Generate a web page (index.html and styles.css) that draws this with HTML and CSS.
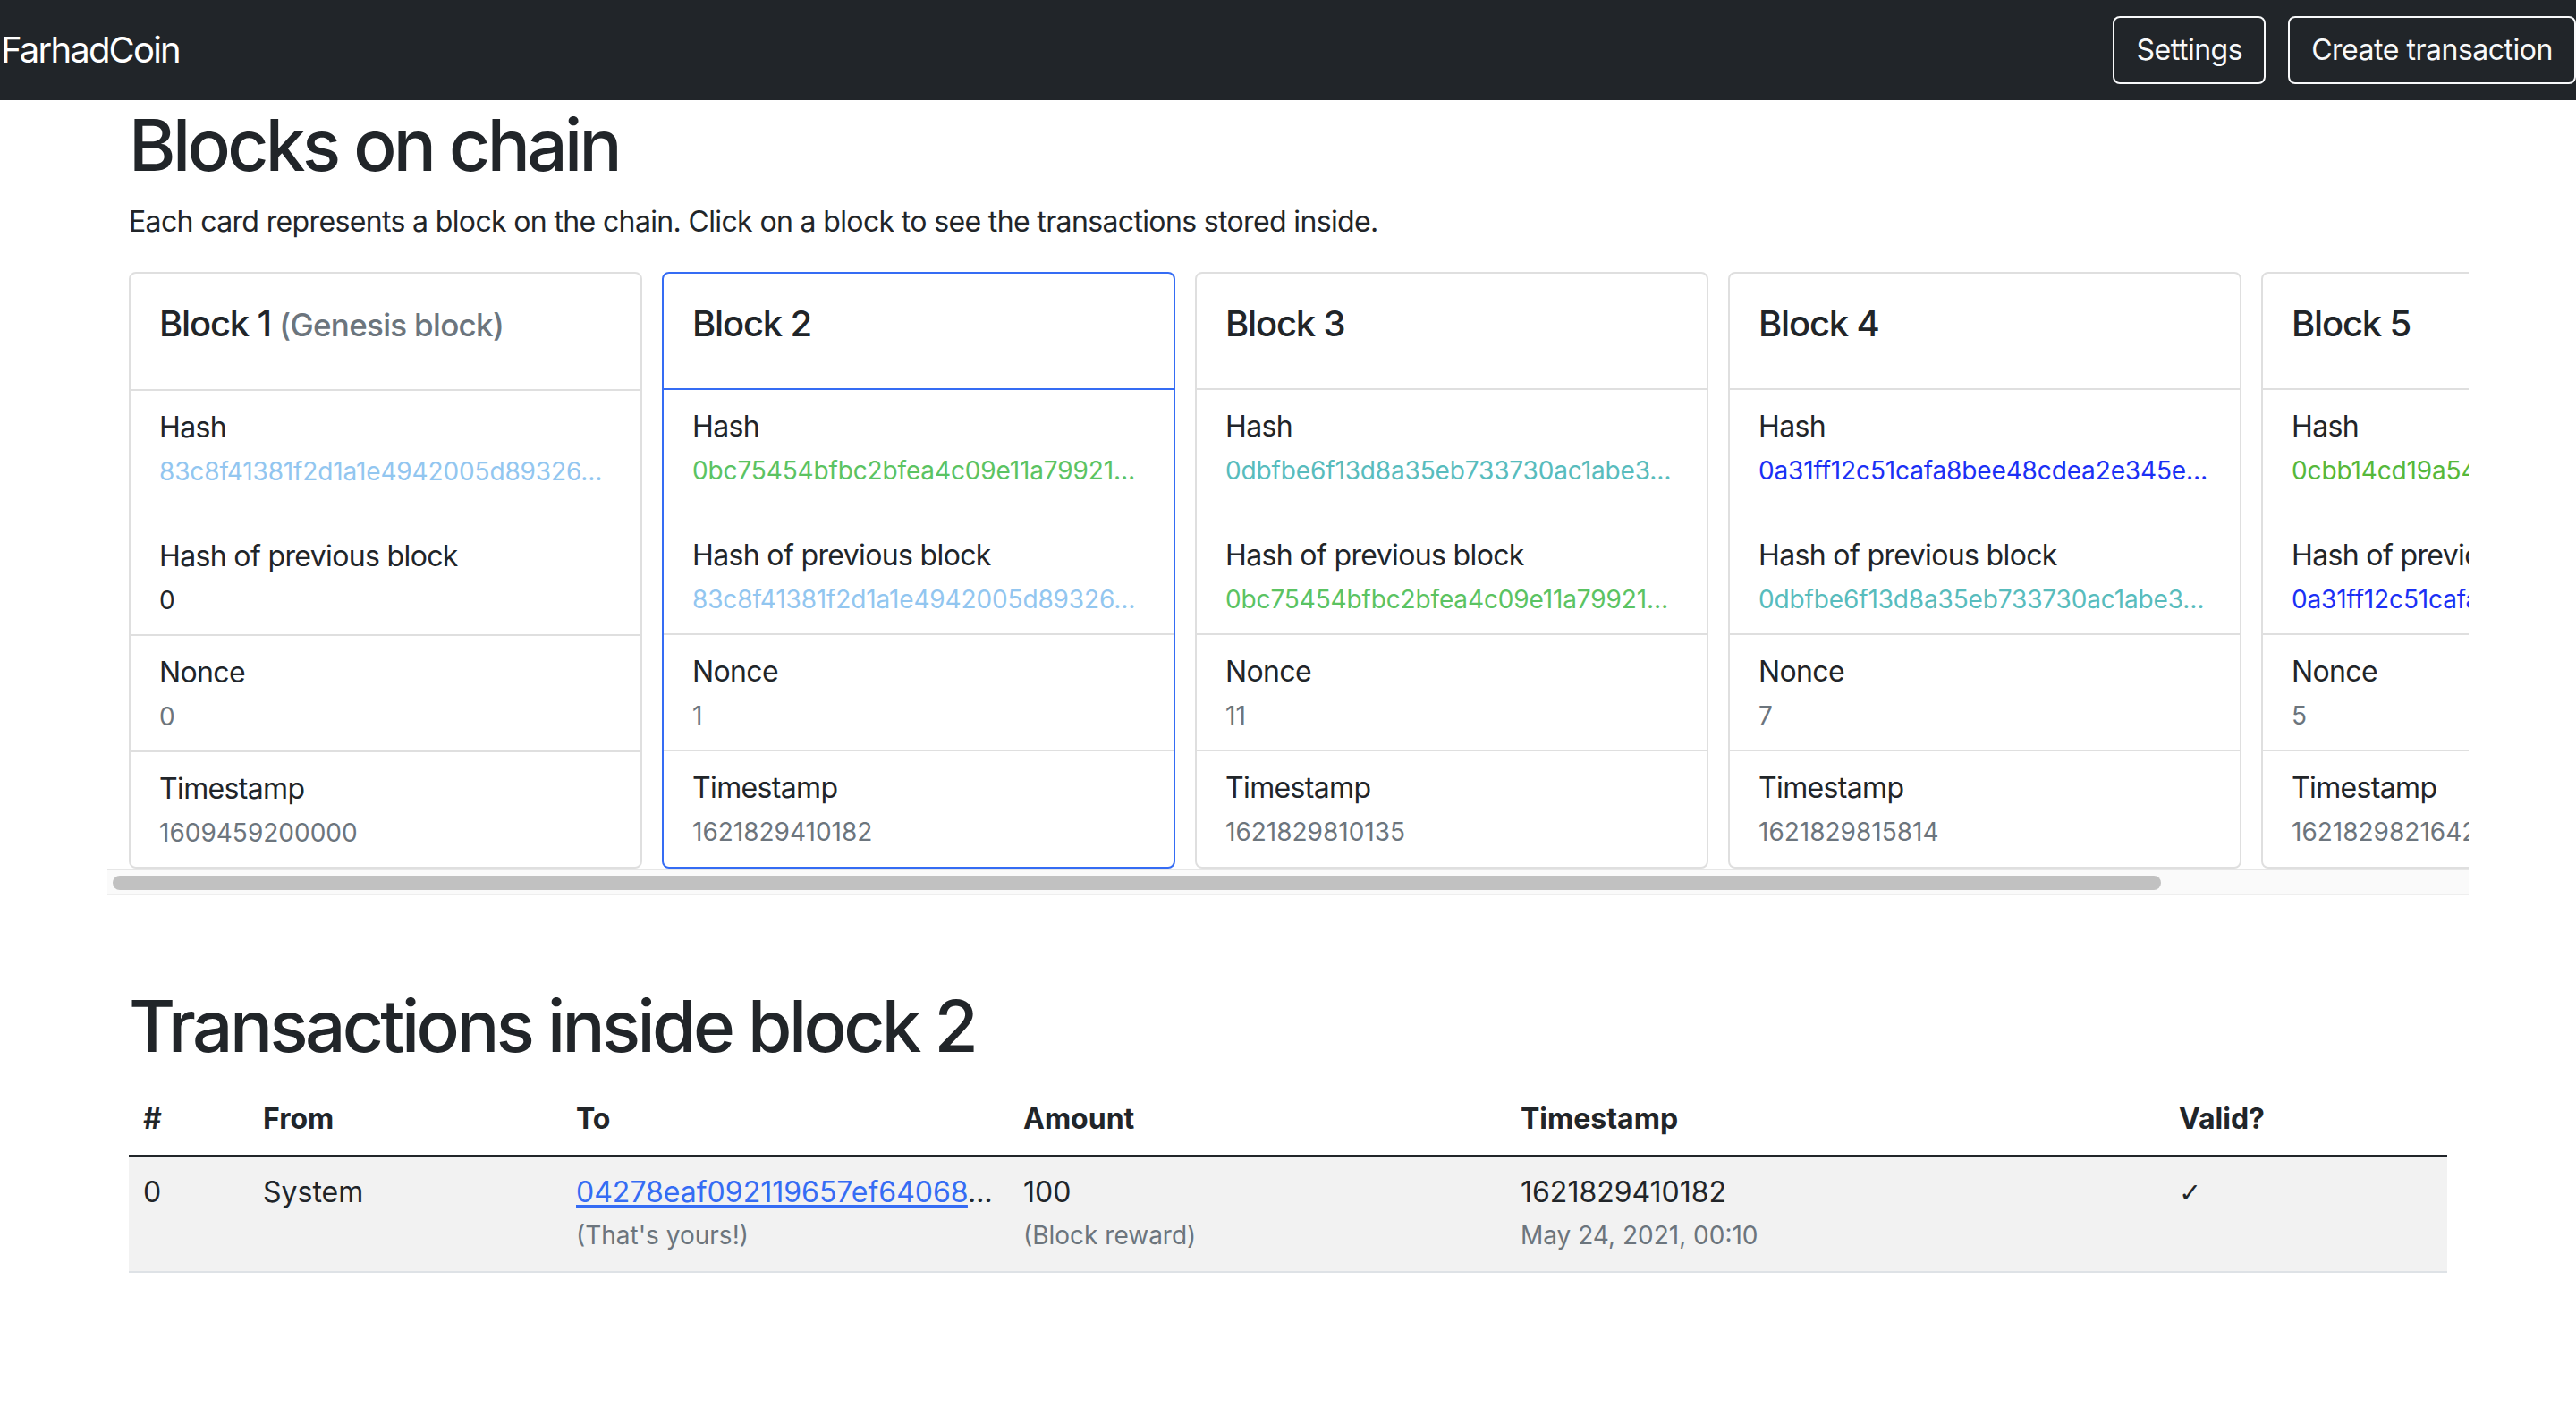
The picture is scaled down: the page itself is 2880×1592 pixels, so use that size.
FILE: index.html
```html
<!DOCTYPE html>
<html lang="en">
<head>
<meta charset="utf-8">
<title>FarhadCoin</title>
<link rel="stylesheet" href="styles.css">
</head>
<body>
<nav class="navbar">
  <a class="brand" href="#">FarhadCoin</a>
  <div class="nav-actions">
    <button class="btn-outline">Settings</button>
    <button class="btn-outline">Create transaction</button>
  </div>
</nav>

<main class="container">
  <h1 class="page-title">Blocks on chain</h1>
  <p class="intro">Each card represents a block on the chain. Click on a block to see the transactions stored inside.</p>

  <div class="chain-scroller">
    <div class="chain">
      <div class="card">
        <div class="card-head"><h5 class="card-title">Block 1 <small class="muted">(Genesis block)</small></h5></div>
        <div class="card-list">
          <div class="card-item">
            <div class="field">
              <div class="label">Hash</div>
              <div class="value hash" style="color:#92c6f0">83c8f41381f2d1a1e4942005d89326…</div>
            </div>
            <div class="field field-gap">
              <div class="label">Hash of previous block</div>
              <div class="value">0</div>
            </div>
          </div>
          <div class="card-item">
            <div class="label">Nonce</div>
            <div class="value muted">0</div>
          </div>
          <div class="card-item">
            <div class="label">Timestamp</div>
            <div class="value muted">1609459200000</div>
          </div>
        </div>
      </div>

      <div class="card selected">
        <div class="card-head"><h5 class="card-title">Block 2</h5></div>
        <div class="card-list">
          <div class="card-item">
            <div class="field">
              <div class="label">Hash</div>
              <div class="value hash" style="color:#5bc362">0bc75454bfbc2bfea4c09e11a79921…</div>
            </div>
            <div class="field field-gap">
              <div class="label">Hash of previous block</div>
              <div class="value hash" style="color:#92c6f0">83c8f41381f2d1a1e4942005d89326…</div>
            </div>
          </div>
          <div class="card-item">
            <div class="label">Nonce</div>
            <div class="value muted">1</div>
          </div>
          <div class="card-item">
            <div class="label">Timestamp</div>
            <div class="value muted">1621829410182</div>
          </div>
        </div>
      </div>

      <div class="card">
        <div class="card-head"><h5 class="card-title">Block 3</h5></div>
        <div class="card-list">
          <div class="card-item">
            <div class="field">
              <div class="label">Hash</div>
              <div class="value hash" style="color:#58bcbd">0dbfbe6f13d8a35eb733730ac1abe3…</div>
            </div>
            <div class="field field-gap">
              <div class="label">Hash of previous block</div>
              <div class="value hash" style="color:#5bc362">0bc75454bfbc2bfea4c09e11a79921…</div>
            </div>
          </div>
          <div class="card-item">
            <div class="label">Nonce</div>
            <div class="value muted">11</div>
          </div>
          <div class="card-item">
            <div class="label">Timestamp</div>
            <div class="value muted">1621829810135</div>
          </div>
        </div>
      </div>

      <div class="card">
        <div class="card-head"><h5 class="card-title">Block 4</h5></div>
        <div class="card-list">
          <div class="card-item">
            <div class="field">
              <div class="label">Hash</div>
              <div class="value hash" style="color:#1b30f5">0a31ff12c51cafa8bee48cdea2e345e…</div>
            </div>
            <div class="field field-gap">
              <div class="label">Hash of previous block</div>
              <div class="value hash" style="color:#58bcbd">0dbfbe6f13d8a35eb733730ac1abe3…</div>
            </div>
          </div>
          <div class="card-item">
            <div class="label">Nonce</div>
            <div class="value muted">7</div>
          </div>
          <div class="card-item">
            <div class="label">Timestamp</div>
            <div class="value muted">1621829815814</div>
          </div>
        </div>
      </div>

      <div class="card">
        <div class="card-head"><h5 class="card-title">Block 5</h5></div>
        <div class="card-list">
          <div class="card-item">
            <div class="field">
              <div class="label">Hash</div>
              <div class="value hash" style="color:#56b83b">0cbb14cd19a54e2f07b3d6a18c9e5…</div>
            </div>
            <div class="field field-gap">
              <div class="label">Hash of previous block</div>
              <div class="value hash" style="color:#1b30f5">0a31ff12c51cafa8bee48cdea2e345e…</div>
            </div>
          </div>
          <div class="card-item">
            <div class="label">Nonce</div>
            <div class="value muted">5</div>
          </div>
          <div class="card-item">
            <div class="label">Timestamp</div>
            <div class="value muted">1621829821642</div>
          </div>
        </div>
      </div>
    </div>
    <div class="scrollbar"><div class="scroll-thumb"></div></div>
  </div>

  <h1 class="page-title section-title">Transactions inside block 2</h1>

  <table class="tx-table">
    <colgroup>
      <col class="c-idx"><col class="c-from"><col class="c-to"><col class="c-amount"><col class="c-time"><col class="c-valid">
    </colgroup>
    <thead>
      <tr><th>#</th><th>From</th><th>To</th><th>Amount</th><th>Timestamp</th><th>Valid?</th></tr>
    </thead>
    <tbody>
      <tr>
        <td>0</td>
        <td>System</td>
        <td>
          <div class="trunc"><a href="#" class="addr">04278eaf092119657ef64068</a>…</div>
          <div class="sub">(That's yours!)</div>
        </td>
        <td>
          <div>100</div>
          <div class="sub">(Block reward)</div>
        </td>
        <td>
          <div>1621829410182</div>
          <div class="sub">May 24, 2021, 00:10</div>
        </td>
        <td><span class="check">✓</span></td>
      </tr>
    </tbody>
  </table>
</main>
</body>
</html>
```

FILE: styles.css
```css
* { box-sizing: border-box; }

html, body {
  margin: 0;
  padding: 0;
  background: #fff;
}

body {
  font-family: Inter, "Noto Sans", "Liberation Sans", sans-serif;
  font-size: 32px;
  line-height: 48px;
  color: #212529;
}

/* Navbar */
.navbar {
  height: 112px;
  background: #212529;
  display: flex;
  align-items: center;
  justify-content: space-between;
}

.brand {
  color: #fff;
  text-decoration: none;
  font-size: 40px;
  line-height: 60px;
  letter-spacing: -0.045em;
  padding-left: 1px;
}

.nav-actions {
  display: flex;
  gap: 25px;
}

.btn-outline {
  font-family: inherit;
  font-size: 32px;
  line-height: 48px;
  letter-spacing: -0.015em;
  padding: 12px 24px;
  color: #f8f9fa;
  background: transparent;
  border: 2px solid #f8f9fa;
  border-radius: 8px;
}

/* Layout */
.container {
  max-width: 2640px;
  margin: 0 auto;
  padding: 0 24px;
}

.page-title {
  margin: 0 0 16px;
  padding-top: 2px;
  font-size: 80px;
  font-weight: 500;
  line-height: 96px;
  letter-spacing: -0.045em;
}

.intro {
  margin: -2px 0 32px;
  letter-spacing: -0.02em;
}

.section-title {
  margin-top: 96px;
}

/* Chain of cards */
.chain-scroller {
  margin: 0 -24px;
}

.chain {
  display: flex;
  padding: 0 24px;
  overflow: hidden;
}

.scrollbar {
  height: 30px;
  padding: 6px 6px 0;
  background: #fafafa;
  border-top: 2px solid #e6e6e6;
  border-bottom: 2px solid #eeeeee;
}

.scroll-thumb {
  width: 2290px;
  height: 16px;
  border-radius: 8px;
  background: #c1c1c1;
}

.card {
  flex: 0 0 574px;
  width: 574px;
  margin-right: 22px;
  border: 2px solid #dfdfdf;
  border-radius: 8px;
  background: #fff;
  display: flex;
  flex-direction: column;
}

.card.selected {
  border-color: #356cf4;
}

.card-head {
  padding: 32px;
}

.card-title {
  margin: 0 0 16px;
  font-size: 40px;
  font-weight: 500;
  line-height: 48px;
  letter-spacing: -0.03em;
}

.card-title small {
  font-size: 35px;
  font-weight: 500;
  letter-spacing: -0.02em;
}

.card-list {
  border-top: 2px solid #dfdfdf;
}

.card.selected .card-list {
  border-top-color: #356cf4;
}

.card-item {
  padding: 16px 32px;
  border-bottom: 2px solid #dfdfdf;
}

.card-item:last-child {
  border-bottom: 0;
}

.field-gap {
  margin-top: 48px;
}

.label {
  font-size: 32px;
  line-height: 50px;
  margin-bottom: -2px;
  letter-spacing: -0.02em;
}

.value {
  font-size: 28px;
  line-height: 52px;
  margin-bottom: -4px;
  white-space: nowrap;
  overflow: hidden;
  text-overflow: ellipsis;
}

.hash {
  letter-spacing: -0.005em;
}

.muted {
  color: #6c757d;
}

/* Table */
.tx-table {
  width: 100%;
  border-collapse: collapse;
  table-layout: fixed;
}

.c-idx { width: 134px; }
.c-from { width: 350px; }
.c-to { width: 500px; }
.c-amount { width: 556px; }
.c-time { width: 736px; }
.c-valid { width: 316px; }

.tx-table th {
  text-align: left;
  font-weight: 700;
  padding: 16px;
  border-bottom: 2px solid #212529;
}

.tx-table td {
  padding: 16px;
  vertical-align: top;
  border-bottom: 2px solid #dee2e6;
}

.tx-table tbody tr {
  background: #f2f2f2;
}

.trunc {
  white-space: nowrap;
  overflow: hidden;
}

.addr {
  color: #356cf4;
  text-decoration: underline;
  text-underline-offset: 3px;
}

.sub {
  font-size: 28px;
  color: #6c757d;
}

.check {
  font-family: "DejaVu Sans", sans-serif;
  font-size: 30px;
}
```
